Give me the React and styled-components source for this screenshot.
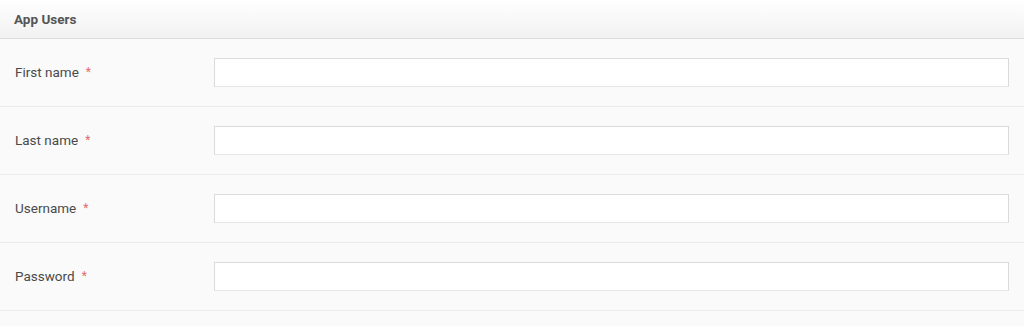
import React from "react";
import styled, { createGlobalStyle } from "styled-components";

const Global = createGlobalStyle`
  html, body { margin: 0; padding: 0; background: #fafafa; }
  body { font-family: Roboto, "Liberation Sans", Arial, sans-serif; }
  * { box-sizing: border-box; }
`;

const Panel = styled.div`
  width: 1024px;
  background: #fafafa;
`;

const Header = styled.div`
  height: 39px;
  display: flex;
  align-items: center;
  padding-left: 14px;
  padding-bottom: 1px;
  background: linear-gradient(to bottom, #ffffff 0%, #f1f1f1 100%);
  border-bottom: 1px solid #dedede;
  font-size: 13.5px;
  font-weight: 700;
  color: #555;
`;

const Row = styled.div`
  height: 68px;
  display: flex;
  align-items: center;
  padding: 0 15px;
  border-bottom: 1px solid #ebebeb;
  background: #fafafa;
`;

const Label = styled.label`
  width: 199px;
  flex: none;
  font-size: 13.5px;
  color: #4a4a4a;
  display: flex;
  align-items: center;
  margin-top: -2px;
`;

const Required = styled.span`
  color: #e56a6a;
  margin-left: 7px;
  font-size: 12px;
`;

const Input = styled.input`
  flex: 1;
  height: 29px;
  border: 1px solid #dadada;
  border-bottom-color: #e6e6e6;
  background: #fff;
  outline: none;
  font-family: inherit;
  font-size: 13px;
  padding: 0 8px;
`;

const fields = [
  { label: "First name", type: "text" },
  { label: "Last name", type: "text" },
  { label: "Username", type: "text" },
  { label: "Password", type: "password" },
];

export default function App() {
  return (
    <>
      <Global />
      <Panel>
        <Header>App Users</Header>
        {fields.map((f) => (
          <Row key={f.label}>
            <Label>
              {f.label}
              <Required>*</Required>
            </Label>
            <Input type={f.type} />
          </Row>
        ))}
      </Panel>
    </>
  );
}
